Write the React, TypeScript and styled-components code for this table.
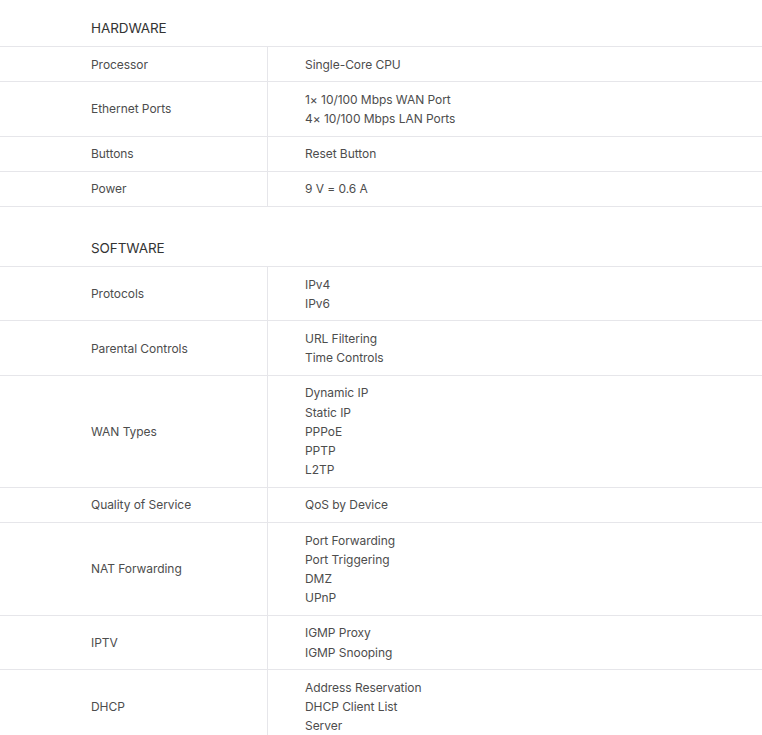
import * as React from 'react';
import styled, { createGlobalStyle } from 'styled-components';

const GlobalStyle = createGlobalStyle`
  html, body {
    margin: 0;
    padding: 0;
    background: #ffffff;
  }
  body {
    font-family: Inter, "Noto Sans", "Liberation Sans", sans-serif;
  }
`;

const Page = styled.div`
  width: 762px;
  display: flex;
  flex-direction: column;
  gap: 13px;
`;

const Section = styled.section`
  display: flex;
  flex-direction: column;
`;

const SectionTitle = styled.h2`
  margin: 0;
  padding: 18px 0 8px 91px;
  font-size: 13.5px;
  line-height: 20px;
  font-weight: 400;
  letter-spacing: -0.1px;
  color: #333333;
  border-bottom: 1px solid #e6e6ea;
`;

const Row = styled.div`
  display: grid;
  grid-template-columns: 268px 1fr;
  border-bottom: 1px solid #e6e6ea;
  font-size: 12px;
  line-height: 19.2px;
  letter-spacing: -0.05px;
  color: #4d4d4d;
`;

const Label = styled.div`
  display: flex;
  align-items: center;
  padding: 7.5px 0 7.5px 91px;
  border-right: 1px solid #e6e6ea;
`;

const Values = styled.div`
  display: flex;
  flex-direction: column;
  justify-content: center;
  padding: 7.5px 0 7.5px 37px;
`;

interface Spec {
  label: string;
  values: string[];
}

const hardware: Spec[] = [
  { label: 'Processor', values: ['Single-Core CPU'] },
  { label: 'Ethernet Ports', values: ['1\u00d7 10/100 Mbps WAN Port', '4\u00d7 10/100 Mbps LAN Ports'] },
  { label: 'Buttons', values: ['Reset Button'] },
  { label: 'Power', values: ['9 V = 0.6 A'] },
];

const software: Spec[] = [
  { label: 'Protocols', values: ['IPv4', 'IPv6'] },
  { label: 'Parental Controls', values: ['URL Filtering', 'Time Controls'] },
  { label: 'WAN Types', values: ['Dynamic IP', 'Static IP', 'PPPoE', 'PPTP', 'L2TP'] },
  { label: 'Quality of Service', values: ['QoS by Device'] },
  { label: 'NAT Forwarding', values: ['Port Forwarding', 'Port Triggering', 'DMZ', 'UPnP'] },
  { label: 'IPTV', values: ['IGMP Proxy', 'IGMP Snooping'] },
  { label: 'DHCP', values: ['Address Reservation', 'DHCP Client List', 'Server'] },
];

const SpecTable = ({ title, rows }: { title: string; rows: Spec[] }) => (
  <Section>
    <SectionTitle>{title}</SectionTitle>
    {rows.map((row) => (
      <Row key={row.label}>
        <Label>{row.label}</Label>
        <Values>
          {row.values.map((v) => (
            <div key={v}>{v}</div>
          ))}
        </Values>
      </Row>
    ))}
  </Section>
);

export default function App() {
  return (
    <>
      <GlobalStyle />
      <Page>
        <SpecTable title="HARDWARE" rows={hardware} />
        <SpecTable title="SOFTWARE" rows={software} />
      </Page>
    </>
  );
}
